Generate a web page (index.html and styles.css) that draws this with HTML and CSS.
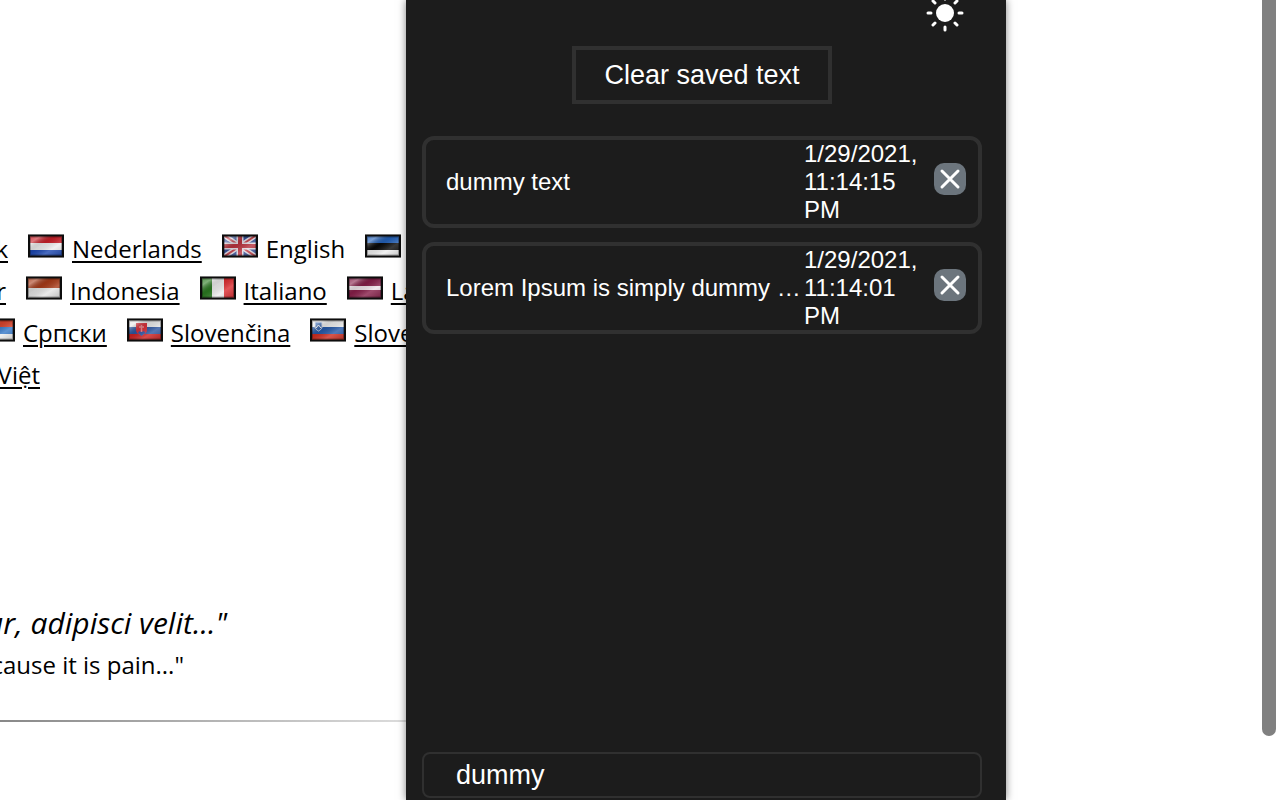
FILE: index.html
```html
<!DOCTYPE html>
<html lang="en">
<head>
    <meta charset="UTF-8">
    <meta name="viewport" content="width=device-width, initial-scale=1.0">
    <title>Saved text</title>
    <link rel="stylesheet" href="styles.css">
</head>
<body>
    <!-- Shared gradients for the flags -->
    <svg class="defs" aria-hidden="true">
        <defs>
            <linearGradient id="gloss" x1="0" y1="0" x2="1" y2="1">
                <stop offset="0" stop-color="#fff" stop-opacity=".1"/>
                <stop offset=".22" stop-color="#fff" stop-opacity=".4"/>
                <stop offset=".42" stop-color="#000" stop-opacity=".1"/>
                <stop offset=".65" stop-color="#fff" stop-opacity=".2"/>
                <stop offset="1" stop-color="#000" stop-opacity=".22"/>
            </linearGradient>
            <g id="frame">
                <rect width="36" height="24" fill="url(#gloss)"/>
                <rect x="2.500" y="3" width="31" height="18" fill="none" stroke="#000" stroke-opacity=".3"/>
                <rect x="1" y="1.500" width="34" height="21" fill="none" stroke="#0c0c0c" stroke-width="2"/>
                <path d="M0 .5h36M0 23.500h36" stroke="#777"/>
            </g>
        </defs>
    </svg>

    <div class="page">
        <div class="languages">
            <div class="row">
                <span class="edge edge-1"><a href="#">k</a></span>
                <span class="lang">
                    <svg class="flag" viewBox="0 0 36 24"><path fill="#c91f28" d="M0 0h36v9H0z"/><path fill="#eee" d="M0 9h36v7H0z"/><path fill="#1b46b0" d="M0 16h36v8H0z"/><use href="#frame"/></svg>
                    <a href="#">Nederlands</a>
                </span>
                <span class="lang">
                    <svg class="flag" viewBox="0 0 36 24"><path fill="#35509a" d="M0 0h36v24H0z"/><path stroke="#e4dce4" stroke-width="5" d="M0 0l36 24M36 0L0 24"/><path stroke="#c4404a" stroke-width="2" d="M0 0l36 24M36 0L0 24"/><path stroke="#e4dce4" stroke-width="7" d="M18 0v24M0 12h36"/><path stroke="#b8303c" stroke-width="4" d="M18 0v24M0 12h36"/><use href="#frame"/></svg>
                    <span>English</span>
                </span>
                <span class="lang">
                    <svg class="flag" viewBox="0 0 36 24"><path fill="#2260b8" d="M0 0h36v9H0z"/><path fill="#080808" d="M0 9h36v7H0z"/><path fill="#eee" d="M0 16h36v8H0z"/><use href="#frame"/></svg>
                </span>
            </div>
            <div class="row">
                <span class="edge edge-2"><a href="#">r</a></span>
                <span class="lang">
                    <svg class="flag" viewBox="0 0 36 24"><path fill="#a83a18" d="M0 0h36v12H0z"/><path fill="#e4e4e4" d="M0 12h36v12H0z"/><use href="#frame"/></svg>
                    <a href="#">Indonesia</a>
                </span>
                <span class="lang">
                    <svg class="flag" viewBox="0 0 36 24"><path fill="#2a7a20" d="M0 0h12v24H0z"/><path fill="#eee" d="M12 0h12v24H12z"/><path fill="#dc2c30" d="M24 0h12v24H24z"/><use href="#frame"/></svg>
                    <a href="#">Italiano</a>
                </span>
                <span class="lang">
                    <svg class="flag" viewBox="0 0 36 24"><path fill="#861d48" d="M0 0h36v24H0z"/><path fill="#f0e4ea" d="M0 10h36v4H0z"/><use href="#frame"/></svg>
                    <a href="#">Latviešu</a>
                </span>
            </div>
            <div class="row">
                <span class="edge edge-3">
                    <svg class="flag" viewBox="0 0 36 24"><path fill="#d8432c" d="M0 0h36v9H0z"/><path fill="#3578c8" d="M0 9h36v7H0z"/><path fill="#eee" d="M0 16h36v8H0z"/><use href="#frame"/></svg>
                </span>
                <a class="after-edge" href="#">Српски</a>
                <span class="lang">
                    <svg class="flag" viewBox="0 0 36 24"><path fill="#e8e8e8" d="M0 0h36v9H0z"/><path fill="#2c55a0" d="M0 9h36v7H0z"/><path fill="#cc2020" d="M0 16h36v8H0z"/><path fill="#d8303a" d="M9 5h11v7c0 3-3 5-5.500 6C12 17 9 15 9 12z"/><path fill="#3058a8" d="M11 15c1-2 2-2 3.500-1 1.500-1 3-1 4 1l-4 3z"/><path stroke="#e88890" stroke-width="1.500" d="M14.500 7v7M12 9h5"/><use href="#frame"/></svg>
                    <a href="#">Slovenčina</a>
                </span>
                <span class="lang">
                    <svg class="flag" viewBox="0 0 36 24"><path fill="#eee" d="M0 0h36v9H0z"/><path fill="#2458a8" d="M0 9h36v7H0z"/><path fill="#cc2c20" d="M0 16h36v8H0z"/><path fill="#2c5ca8" stroke="#d0d8e8" d="M5 4h7v5c0 2-2 3-3.500 4C7 12 5 11 5 9z"/><path stroke="#fff" fill="none" d="M6 10l2.500-3L11 10"/><use href="#frame"/></svg>
                    <a href="#">Slovenščina</a>
                </span>
            </div>
            <div class="row">
                <span class="edge edge-4"><a href="#">Việt</a></span>
            </div>
        </div>

        <p class="quote quote-latin">ur, adipisci velit..."</p>
        <p class="quote quote-english">cause it is pain..."</p>
        <hr>
    </div>

    <div class="scrollbar"></div>

    <!-- Extension popup -->
    <div class="popup">
        <button class="theme-toggle" type="button" aria-label="Toggle theme">
            <svg viewBox="-19 -13 38 32" width="38" height="32">
                <circle r="9" fill="#fff"/>
                <path d="M0 14v3M0-14v-3M14 0h3M-14 0h-3M10 10l2 2M-10 10l-2 2M10-10l2-2M-10-10l-2-2" stroke="#fff" stroke-width="3" stroke-linecap="round"/>
            </svg>
        </button>

        <button class="clear" type="button">Clear saved text</button>

        <ul class="items">
            <li class="item">
                <span class="text">dummy text</span>
                <span class="date">1/29/2021, 11:14:15 PM</span>
                <button class="delete" type="button" aria-label="Delete">
                    <svg viewBox="0 0 32 32"><path d="M8 8l16 16M24 8L8 24" stroke="#fff" stroke-width="3" stroke-linecap="round"/></svg>
                </button>
            </li>
            <li class="item">
                <span class="text">Lorem Ipsum is simply dummy text of the</span>
                <span class="date">1/29/2021, 11:14:01 PM</span>
                <button class="delete" type="button" aria-label="Delete">
                    <svg viewBox="0 0 32 32"><path d="M8 8l16 16M24 8L8 24" stroke="#fff" stroke-width="3" stroke-linecap="round"/></svg>
                </button>
            </li>
        </ul>

        <input class="search" type="text" value="dummy" aria-label="Search saved text">
    </div>
</body>
</html>
```
FILE: styles.css
```css
* {
    box-sizing: border-box;
}

body {
    margin: 0;
    height: 100vh;
    position: relative;
    overflow: hidden;
    background: #fff;
    color: #000;
    font-family: "Open Sans", "Noto Sans", sans-serif;
    font-size: 24px;
}

.defs {
    position: absolute;
    width: 0;
    height: 0;
}

/* Page behind the popup */
.page {
    padding-top: 228px;
}

.row {
    display: flex;
    align-items: baseline;
    line-height: 42px;
    white-space: nowrap;
}

.row a {
    color: #000;
    text-decoration-thickness: 2px;
    text-underline-offset: 3px;
}

.lang {
    display: flex;
    align-items: baseline;
    gap: 8px;
    margin-left: 20px;
}

.flag {
    width: 36px;
    height: 24px;
    flex: none;
}

/* Items cut by the left side of the window */
.edge {
    display: flex;
    justify-content: flex-end;
    align-items: baseline;
}

.edge-1 {
    width: 8px;
}

.edge-2 {
    width: 6px;
}

.edge-3 {
    width: 15px;
}

.edge-4 {
    width: 40px;
}

.after-edge {
    margin-left: 8px;
}

.quote {
    display: flex;
    justify-content: flex-end;
    margin: 0;
    line-height: 42px;
    white-space: nowrap;
}

.quote-latin {
    width: 227px;
    margin-top: 206px;
    font-size: 30px;
    font-style: italic;
}

.quote-english {
    width: 184px;
}

hr {
    height: 2px;
    margin: 34px 0 0;
    border: 0;
    background: linear-gradient(to right, #888, #dcdcdc 406px, #fff 600px);
}

.scrollbar {
    position: absolute;
    top: 0;
    right: 4px;
    width: 14px;
    height: 92%;
    border-radius: 0 0 7px 7px;
    background: #808080;
}

/* Popup */
.popup {
    position: absolute;
    top: 0;
    bottom: 0;
    right: 274px;
    width: 600px;
    padding: 0 24px 2px 16px;
    display: flex;
    flex-direction: column;
    background: #1c1c1c;
    color: #fff;
    font-family: "Liberation Sans", Arial, sans-serif;
    box-shadow: 0 0 8px rgba(0, 0, 0, 0.5);
}

.popup button,
.popup input {
    font-family: inherit;
    color: inherit;
}

.theme-toggle {
    align-self: flex-end;
    height: 32px;
    margin-right: 18px;
    padding: 0;
    border: 0;
    background: none;
}

.theme-toggle svg {
    display: block;
}

.clear {
    align-self: center;
    margin-top: 14px;
    padding: 9px 28px;
    border: 4px solid #303030;
    background: none;
    font-size: 27px;
    line-height: 32px;
}

.items {
    display: flex;
    flex-direction: column;
    gap: 14px;
    margin: 32px 0 0;
    padding: 0;
    list-style: none;
}

.item {
    display: flex;
    align-items: center;
    padding: 0 12px 0 20px;
    border: 4px solid #303030;
    border-radius: 12px;
    line-height: 28px;
}

.text {
    flex: 1;
    overflow: hidden;
    text-overflow: ellipsis;
    white-space: nowrap;
}

.date {
    width: 114px;
    margin-right: 16px;
}

.delete {
    width: 32px;
    height: 32px;
    margin-bottom: 6px;
    padding: 0;
    border: 0;
    border-radius: 10px;
    background: #6c757d;
}

.delete svg {
    display: block;
}

.search {
    width: 100%;
    height: 46px;
    margin-top: auto;
    padding: 0 32px;
    border: 2px solid #303030;
    border-radius: 8px;
    background: none;
    font-size: 27px;
}
```
